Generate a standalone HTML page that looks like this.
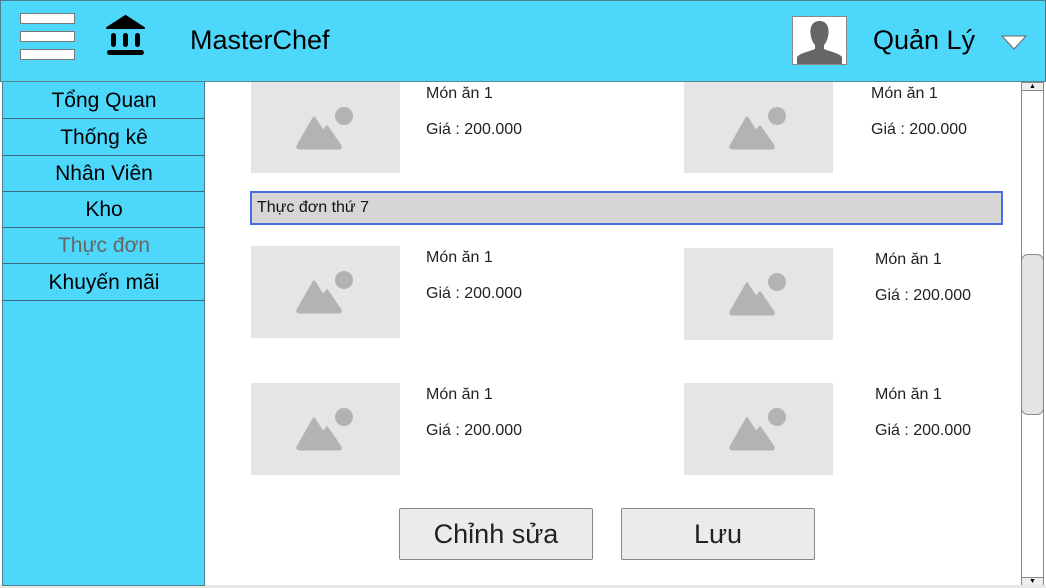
<!DOCTYPE html>
<html><head><meta charset="utf-8"><style>
*{margin:0;padding:0;box-sizing:border-box}
body{width:1046px;height:588px;position:relative;overflow:hidden;background:#fff;font-family:"Liberation Sans",Arial,sans-serif}
.a{position:absolute}
#hdr{left:0;top:0;width:1046px;height:82px;background:#4dd8fb;border:1px solid #4a7f8f;border-bottom:1px solid #5a8592}
.hb{left:20px;width:55px;height:11px;background:#fff;border:1px solid #777}
#side{left:2px;top:82px;width:203px;height:504px;background:#4dd8fb;border-left:1px solid #4a7f8f;border-right:1px solid #4a7f8f}
.si{position:absolute;left:0;width:202px;height:37px;border-bottom:1px solid #3a6a78;text-align:center;font-size:21px;line-height:37px;color:#000}
.img{width:149px;height:92px;background:#e5e5e5}
.t{font-size:16px;color:#222}
.btn{top:508px;width:194px;height:52px;background:#ebebeb;border:1px solid #888;border-radius:2px;font-size:27px;text-align:center;line-height:50px;color:#222}
</style></head><body>
<div class="a" id="hdr"></div>
<div class="a hb" style="top:13px"></div>
<div class="a hb" style="top:31px"></div>
<div class="a hb" style="top:49px"></div>
<svg class="a" style="left:100px;top:10px" width="50" height="50" viewBox="100 10 50 50">
<path d="M107 28 L125.5 16 L144 28 Z" fill="#000" stroke="#000" stroke-width="2" stroke-linejoin="round"/>
<rect x="111" y="33" width="5" height="14" rx="2.5"/><rect x="123" y="33" width="5" height="14" rx="2.5"/><rect x="135" y="33" width="5" height="14" rx="2.5"/>
<rect x="107" y="50" width="37" height="5" rx="2.5"/>
</svg>
<div class="a" style="left:190px;top:25px;font-size:27px;color:#000">MasterChef</div>
<div class="a" style="left:792px;top:16px;width:55px;height:49px;background:#fff;border:1px solid #888;overflow:hidden">
<svg width="53" height="47" viewBox="0 0 53 47"><path d="M26.5 4 C33 4 36 9 35.5 16 C35 22 33 26 31 28 L31 32 C38 35 46 36 49 40 L49 47 L4 47 L4 40 C7 36 15 35 22 32 L22 28 C20 26 18 22 17.5 16 C17 9 20 4 26.5 4Z" fill="#666"/></svg></div>
<div class="a" style="left:873px;top:25px;font-size:27px;color:#000">Quản Lý</div>
<svg class="a" style="left:1001px;top:35px" width="26" height="16"><path d="M1 1 L25 1 L13 14 Z" fill="#fff" stroke="#666" stroke-width="1"/></svg>
<div class="a" id="side">
<div class="si" style="top:0">Tổng Quan</div>
<div class="si" style="top:37px">Thống kê</div>
<div class="si" style="top:73px">Nhân Viên</div>
<div class="si" style="top:109px">Kho</div>
<div class="si" style="top:145px;color:#666">Thực đơn</div>
<div class="si" style="top:182px">Khuyến mãi</div>
</div>
<svg width="0" height="0" style="position:absolute"><defs><g id="ic"><path d="M47 64 L63 36 L72 50 L76 45 L89 64 Q90 66 88 66 L49 66 Q46 66 47 64Z" fill="#b3b3b3" stroke="#b3b3b3" stroke-width="3" stroke-linejoin="round"/><circle cx="93" cy="34" r="9" fill="#b3b3b3"/></g></defs></svg>
<div class="a img" style="left:251px;top:82px;height:91px"><svg width="149" height="91"><use href="#ic"/></svg></div>
<div class="a img" style="left:684px;top:82px;height:91px"><svg width="149" height="91"><use href="#ic"/></svg></div>
<div class="a img" style="left:251px;top:246px"><svg width="149" height="92"><use href="#ic"/></svg></div>
<div class="a img" style="left:684px;top:248px"><svg width="149" height="92"><use href="#ic"/></svg></div>
<div class="a img" style="left:251px;top:383px"><svg width="149" height="92"><use href="#ic"/></svg></div>
<div class="a img" style="left:684px;top:383px"><svg width="149" height="92"><use href="#ic"/></svg></div>
<div class="a t" style="left:426px;top:85px">Món ăn 1</div><div class="a t" style="left:426px;top:121px">Giá : 200.000</div>
<div class="a t" style="left:871px;top:85px">Món ăn 1</div><div class="a t" style="left:871px;top:121px">Giá : 200.000</div>
<div class="a t" style="left:426px;top:249px">Món ăn 1</div><div class="a t" style="left:426px;top:285px">Giá : 200.000</div>
<div class="a t" style="left:875px;top:251px">Món ăn 1</div><div class="a t" style="left:875px;top:287px">Giá : 200.000</div>
<div class="a t" style="left:426px;top:386px">Món ăn 1</div><div class="a t" style="left:426px;top:422px">Giá : 200.000</div>
<div class="a t" style="left:875px;top:386px">Món ăn 1</div><div class="a t" style="left:875px;top:422px">Giá : 200.000</div>
<div class="a" style="left:250px;top:191px;width:753px;height:34px;background:#d6d6d6;border:2px solid #4a6ee0;font-size:16px;line-height:30px;padding-left:5px;color:#111">Thực đơn thứ 7</div>
<div class="a btn" style="left:399px">Chỉnh sửa</div>
<div class="a btn" style="left:621px">Lưu</div>
<div class="a" style="left:1021px;top:82px;width:23px;height:504px;background:#fff;border-left:1px solid #888;border-right:1px solid #888"></div>
<div class="a" style="left:1021px;top:82px;width:23px;height:9px;border:1px solid #888;background:#eee;font-size:7px;text-align:center;line-height:8px">▲</div>
<div class="a" style="left:1021px;top:577px;width:23px;height:9px;border:1px solid #888;background:#eee;font-size:7px;text-align:center;line-height:8px">▼</div>
<div class="a" style="left:1021px;top:254px;width:23px;height:161px;border:1px solid #888;border-radius:7px;background:#e3e3e3"></div>
<div class="a" style="left:0;top:585px;width:1046px;height:3px;background:#e8e8e8"></div>
<div class="a" style="left:2px;top:585px;width:203px;height:1px;background:#4a7f8f"></div>
</body></html>
